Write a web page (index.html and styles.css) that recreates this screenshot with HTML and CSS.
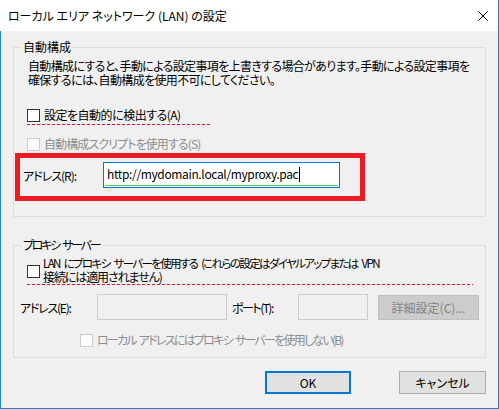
FILE: index.html
```html
<!DOCTYPE html>
<html lang="ja">
<head>
<meta charset="utf-8">
<title>ローカル エリア ネットワーク (LAN) の設定</title>
<link rel="stylesheet" href="styles.css">
</head>
<body>
<div class="window">
  <div class="titlebar">
    <span class="title">ローカル エリア ネットワーク (LAN) の設定</span>
    <span class="close"><svg width="10" height="10" viewBox="0 0 10 10"><path d="M0.5 0.5L9.5 9.5M9.5 0.5L0.5 9.5" stroke="#000" stroke-width="1" fill="none"/></svg></span>
  </div>
  <div class="body">
    <fieldset class="group">
      <legend>自動構成</legend>
      <p class="desc">自動構成にすると、手動による設定事項を上書きする場合があります。手動による設定事項を<br>確保するには、自動構成を使用不可にしてください。</p>
      <div class="check-row detect"><span class="box"></span><span>設定を自動的に検出する(A)</span></div>
      <div class="dashed dashed-detect"></div>
      <div class="check-row disabled script"><span class="box"></span><span>自動構成スクリプトを使用する(S)</span></div>
      <div class="highlight">
        <span class="addr-label">アドレス(R):</span>
        <div class="url-field"><div class="url-text">http://mydomain.local/myproxy.pac<span class="caret"></span></div></div>
      </div>
    </fieldset>
    <fieldset class="group group-proxy">
      <legend class="legend-proxy">プロキシ サーバー</legend>
      <div class="lan-row"><span class="box"></span><span class="lan-text"><span class="lan-line1">LAN にプロキシ サーバーを使用する (これらの設定はダイヤルアップまたは VPN</span><br>接続には適用されません)</span></div>
      <div class="dashed dashed-lan"></div>
      <div class="addr-row">
        <span class="label-addr">アドレス(E):</span>
        <span class="field field-addr"></span>
        <span class="label-port">ポート(T):</span>
        <span class="field field-port"></span>
        <span class="btn-adv">詳細設定(C)...</span>
      </div>
      <div class="check-row disabled bypass"><span class="box"></span><span>ローカル アドレスにはプロキシ サーバーを使用しない(B)</span></div>
    </fieldset>
    <div class="buttons">
      <span class="btn btn-ok">OK</span>
      <span class="btn btn-cancel">キャンセル</span>
    </div>
  </div>
</div>
</body>
</html>
```

FILE: styles.css
```css
* { box-sizing: border-box; }
html, body { margin: 0; padding: 0; background: #f0f0f0; }
body {
  font-family: "Noto Sans CJK JP", "Noto Sans", sans-serif;
  font-size: 12px;
  font-feature-settings: "palt";
  color: #000;
}
.window {
  width: 499px;
  height: 409px;
  border-right: 1px solid #1883d7;
  border-bottom: 1px solid #1883d7;
  background: #f0f0f0;
}
.titlebar {
  height: 31px;
  background: #fff;
  display: flex;
  align-items: center;
  justify-content: space-between;
  padding: 0 10px 0 8px;
}
.title { line-height: 16px; white-space: nowrap; }
.close { display: flex; }
.close svg { display: block; }
.body {
  height: 377px;
  border-left: 1px solid #1883d7;
  overflow: hidden;
}
.group {
  margin: 8px 12px 0;
  padding: 0;
  border: 1px solid #dcdcdc;
  min-width: 0;
}
.group legend {
  margin-left: 8px;
  padding: 0 1px;
  line-height: 16px;
  height: 16px;
  white-space: nowrap;
}
.group .legend-proxy { letter-spacing: -2.3px; word-spacing: 3px; padding-right: 3px; }
.group-proxy { margin-top: 20px; padding-bottom: 9px; }
.desc {
  margin: 4px 0 0 14px;
  line-height: 14px;
  white-space: nowrap;
  letter-spacing: -0.65px;
}
.check-row {
  display: flex;
  align-items: center;
  height: 16px;
  line-height: 16px;
  white-space: nowrap;
}
.box {
  width: 13px;
  height: 13px;
  border: 1px solid #333;
  background: #fff;
  margin-right: 4px;
  flex: none;
}
.check-row.disabled { color: #8d8d8d; }
.check-row.disabled .box { border-color: #cccccc; background: #fcfcfc; }
.detect { margin: 20px 0 0 13px; letter-spacing: -0.5px; }
.script { margin: 11px 0 0 13px; letter-spacing: -0.9px; }
.dashed {
  height: 1px;
  background: repeating-linear-gradient(90deg, #e81123 0 3px, transparent 3px 5px);
}
.dashed-detect { width: 184px; margin: 1px 0 0 13px; }
.highlight {
  margin: 1px 0 15px 1px;
  width: 350px;
  border: 5px solid #ed1c24;
  padding: 4px 0 8px 3px;
  display: flex;
  align-items: center;
}
.addr-label { width: 80px; white-space: nowrap; letter-spacing: -1px; }
.url-field {
  width: 237px;
  height: 26px;
  border: 1px solid #0078d7;
  background: #fff;
  padding: 0 1px 1px;
}
.url-text {
  height: 23px;
  border-bottom: 1px solid #4ed34e;
  padding-left: 2px;
  line-height: 22px;
  white-space: nowrap;
  display: flex;
  align-items: center;
  letter-spacing: -0.36px;
}
.caret {
  width: 1px;
  height: 15px;
  background: #000;
  margin-left: 1px;
}
.lan-row {
  display: flex;
  align-items: flex-start;
  margin: 3px 0 0 13px;
}
.lan-row .box { margin-top: 9px; margin-right: 3px; }
.lan-text { line-height: 14px; white-space: nowrap; letter-spacing: -1.1px; }
.lan-line1 { font-size: 11.5px; letter-spacing: -1.65px; word-spacing: 3px; }
.dashed-lan { width: 446px; margin: 0 0 0 13px; }
.addr-row {
  display: flex;
  align-items: center;
  height: 26px;
  margin: 9px 0 0 6px;
  white-space: nowrap;
}
.label-addr { width: 77px; letter-spacing: -1.25px; }
.field {
  height: 26px;
  border: 1px solid #cccccc;
  background: #f0f0f0;
}
.field-addr { width: 130px; }
.label-port { width: 66px; margin-left: 5px; letter-spacing: -1.5px; }
.field-port { width: 70px; }
.btn-adv {
  margin-left: 10px;
  width: 101px;
  height: 25px;
  background: #cccccc;
  border: 1px solid #bfbfbf;
  color: #838383;
  display: flex;
  align-items: center;
  justify-content: center;
}
.bypass { margin: 12px 0 0 66px; letter-spacing: -1.75px; word-spacing: 2px; }
.buttons {
  display: flex;
  justify-content: flex-end;
  gap: 48px;
  margin-top: 13px;
  padding-right: 12px;
}
.btn {
  height: 23px;
  background: #e1e1e1;
  display: flex;
  align-items: center;
  justify-content: center;
}
.btn-ok { width: 86px; border: 2px solid #0078d7; }
.btn-cancel { width: 87px; border: 1px solid #adadad; }
```
